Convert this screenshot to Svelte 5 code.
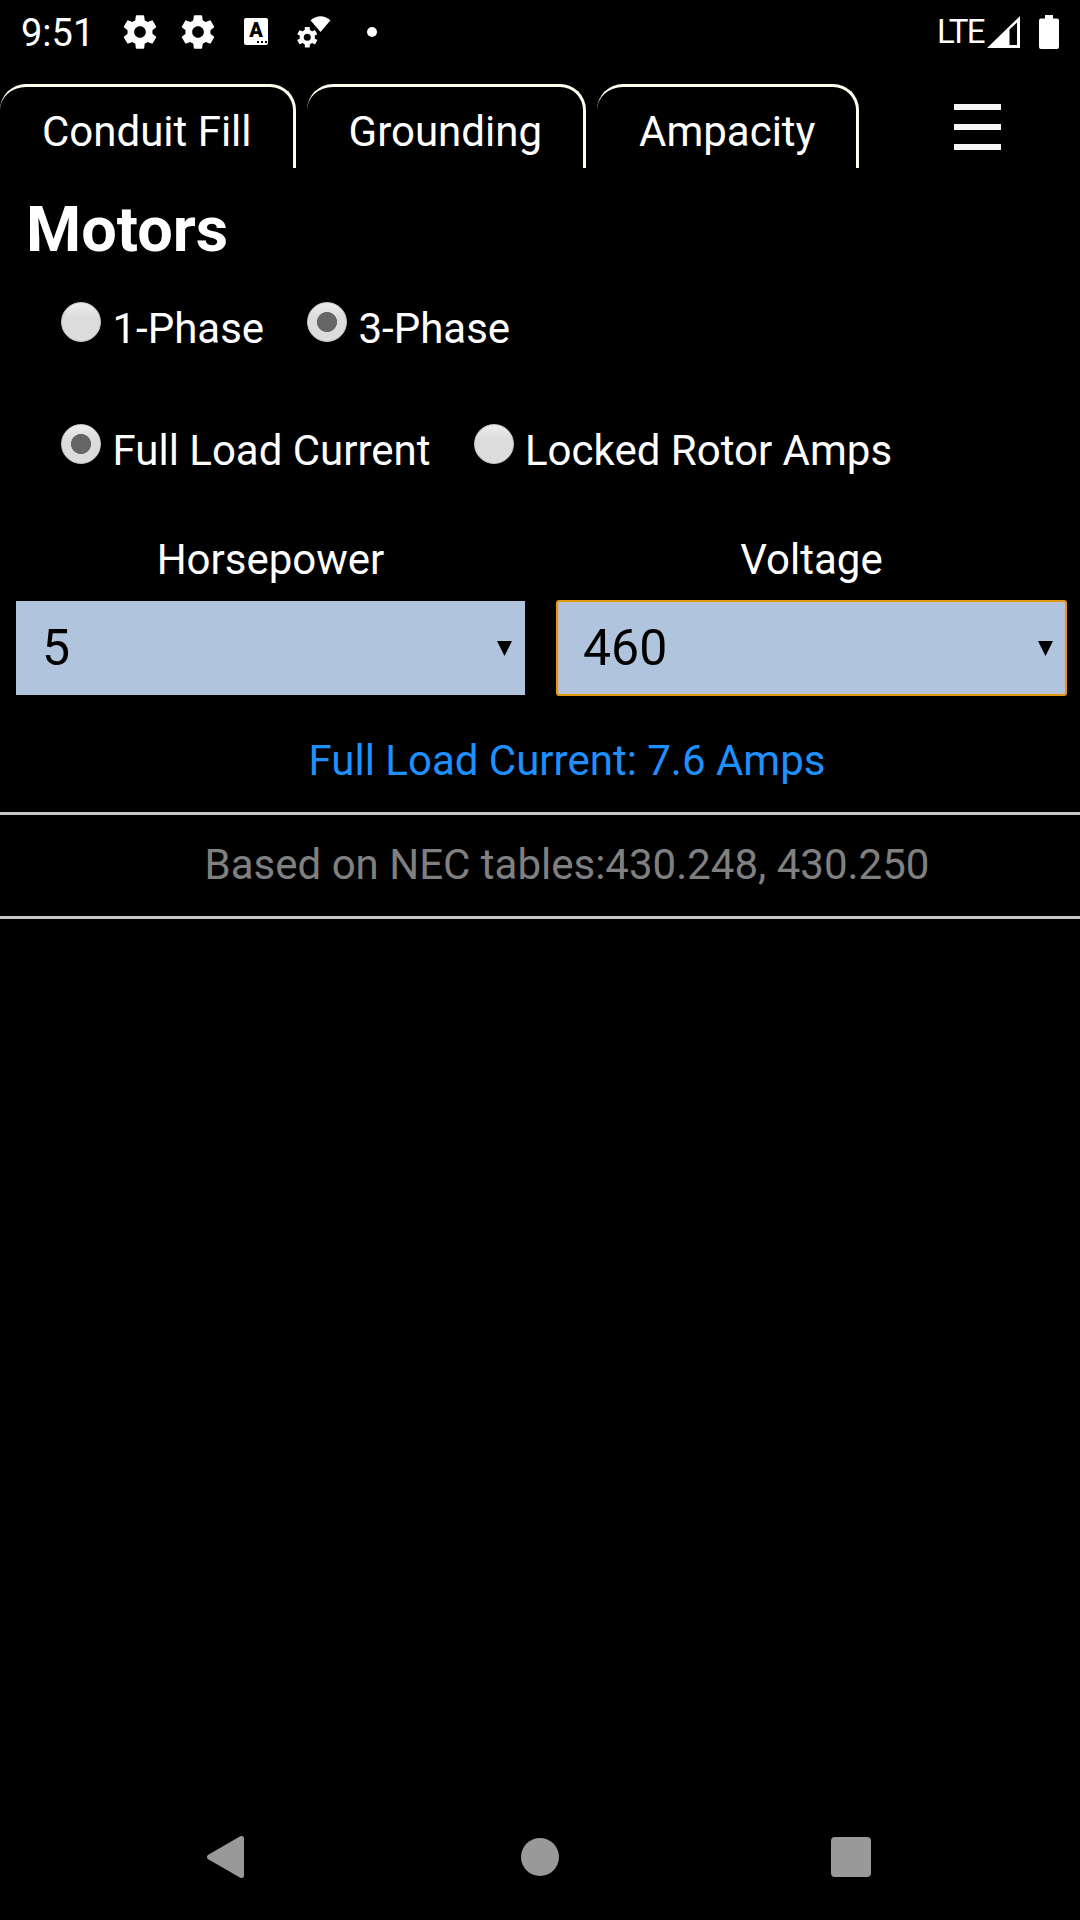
<script>
  const tabs = ['Conduit Fill', 'Grounding', 'Ampacity'];

  const groups = [
    {
      name: 'phase',
      options: [
        { label: '1-Phase', width: 'w-phase' },
        { label: '3-Phase', width: '' }
      ]
    },
    {
      name: 'mode',
      options: [
        { label: 'Full Load Current', width: 'w-flc' },
        { label: 'Locked Rotor Amps', width: '' }
      ]
    }
  ];

  let picked = $state({ phase: '3-Phase', mode: 'Full Load Current' });

  const fields = [
    { label: 'Horsepower', value: '5', focused: false },
    { label: 'Voltage', value: '460', focused: true }
  ];
</script>

{#snippet gear(cls)}
  <svg class={cls} viewBox="0 0 24 24" aria-hidden="true">
    <path fill="#fff" d="M19.43 12.98c.04-.32.07-.64.07-.98s-.03-.66-.07-.98l2.11-1.65c.19-.15.24-.42.12-.64l-2-3.46c-.12-.22-.39-.3-.61-.22l-2.49 1c-.52-.4-1.08-.73-1.69-.98l-.38-2.65C14.46 2.18 14.25 2 14 2h-4c-.25 0-.46.18-.49.42l-.38 2.65c-.61.25-1.17.59-1.69.98l-2.49-1c-.23-.09-.49 0-.61.22l-2 3.46c-.13.22-.07.49.12.64l2.11 1.65c-.04.32-.07.65-.07.98s.03.66.07.98l-2.11 1.65c-.19.15-.24.42-.12.64l2 3.46c.12.22.39.3.61.22l2.49-1c.52.4 1.08.73 1.69.98l.38 2.65c.03.24.24.42.49.42h4c.25 0 .46-.18.49-.42l.38-2.65c.61-.25 1.17-.59 1.69-.98l2.49 1c.23.09.49 0 .61-.22l2-3.46c.12-.22.07-.49-.12-.64l-2.11-1.65zM12 15.5c-1.93 0-3.5-1.57-3.5-3.5s1.57-3.5 3.5-3.5 3.5 1.57 3.5 3.5-1.57 3.5-3.5 3.5z" />
  </svg>
{/snippet}

<div class="screen">
  <header class="status">
    <span class="clock">9:51</span>
    {@render gear('gear')}
    {@render gear('gear second')}
    <span class="app-badge">
      <b>A</b>
      <svg width="10" height="2" viewBox="0 0 10 2"><path d="M0 0h2v2H0zM4 0h2v2H4zM8 0h2v2H8z" fill="#000" /></svg>
    </span>
    <svg class="wifi-gear" width="34" height="32" viewBox="0 0 34 32">
      <path d="M13.5 4.2Q23.5-3.6 33.500 4.200L23.500 16Z" fill="#fff" />
      <g transform="translate(10.300 21.200)">
        <g fill="#fff">
          <circle r="7.600" />
          <rect x="-2.500" y="-10.200" width="5" height="20.400" rx=".6" />
          <rect x="-2.500" y="-10.200" width="5" height="20.400" rx=".6" transform="rotate(60)" />
          <rect x="-2.500" y="-10.200" width="5" height="20.400" rx=".6" transform="rotate(120)" />
        </g>
        <circle r="3.500" fill="#000" />
      </g>
    </svg>
    <span class="more"></span>
    <span class="lte">LTE</span>
    <svg class="signal" width="33" height="32" viewBox="0 0 33 32">
      <path fill="#fff" fill-rule="evenodd" d="M0 32L33 0V32ZM22.500 13.500V29H30V6.500Z" />
    </svg>
    <svg class="battery" width="20" height="34" viewBox="0 0 20 34">
      <path fill="#fff" d="M6 0h8v3.500h4a2 2 0 0 1 2 2V32a2 2 0 0 1-2 2H2a2 2 0 0 1-2-2V5.500a2 2 0 0 1 2-2h4z" />
    </svg>
  </header>

  <nav class="tabs">
    {#each tabs as tab}
      <div class="tab">{tab}</div>
    {/each}
    <div class="menu"><i></i><i></i><i></i></div>
  </nav>

  <main>
    <h1>Motors</h1>

    {#each groups as group}
      <div class="radios">
        {#each group.options as option}
          <label class={option.width}>
            <input type="radio" name={group.name} value={option.label} bind:group={picked[group.name]} />
            <span>{option.label}</span>
          </label>
        {/each}
      </div>
    {/each}

    <div class="fields">
      {#each fields as field}
        <div class="field">
          <div class="caption">{field.label}</div>
          <div class="select" class:focused={field.focused}>
            <span>{field.value}</span>
            <svg width="15" height="15" viewBox="0 0 15 15"><path d="M0 0H15L7.500 15Z" /></svg>
          </div>
        </div>
      {/each}
    </div>

    <div class="row result">Full Load Current: 7.6 Amps</div>
    <div class="row note">Based on NEC tables:430.248, 430.250</div>
  </main>

  <footer class="system-nav">
    <svg width="37" height="42" viewBox="0 0 37 42">
      <path d="M2.500 21L34.500 2.500V39.500Z" fill="#999" stroke="#999" stroke-width="5" stroke-linejoin="round" />
    </svg>
    <span class="home"></span>
    <span class="recents"></span>
  </footer>
</div>

<style>
  :global(body) {
    background: #000;
  }

  .screen {
    width: 1080px;
    height: 1920px;
    overflow: hidden;
    display: flex;
    flex-direction: column;
    background: #000;
    color: #fff;
    font: 42px/50px Roboto, sans-serif;
  }

  .status {
    height: 63px;
    flex: none;
    display: flex;
    align-items: center;
  }

  .clock {
    box-sizing: border-box;
    width: 120px;
    padding: 3px 0 0 21px;
    font-size: 38px;
  }

  .gear {
    width: 40px;
    height: 40px;
    flex: none;
  }

  .gear.second {
    margin-left: 18px;
  }

  .app-badge {
    width: 24px;
    height: 27px;
    margin-left: 26px;
    flex: none;
    display: flex;
    flex-direction: column;
    align-items: center;
    border-radius: 2px;
    background: #fff;
    color: #000;
  }

  .app-badge b {
    font-size: 20px;
    line-height: 24px;
    height: 23px;
    font-weight: 900;
  }

  .app-badge svg {
    flex: none;
    margin-left: 12px;
  }

  .wifi-gear {
    margin-left: 29px;
    flex: none;
  }

  .more {
    width: 10px;
    height: 10px;
    margin-left: 36px;
    border-radius: 50%;
    background: #fff;
  }

  .lte {
    width: 50px;
    margin-left: auto;
    font-size: 33px;
    letter-spacing: -1.600px;
  }

  .signal {
    margin-right: 19px;
    flex: none;
  }

  .battery {
    margin-right: 21px;
    flex: none;
  }

  .tabs {
    height: 105px;
    flex: none;
    display: flex;
    align-items: flex-end;
    gap: 11px;
  }

  .tab {
    box-sizing: border-box;
    height: 84px;
    padding: 20px 41px 0 42px;
    border-top: 3px solid #fffff0;
    border-right: 3px solid #fffff0;
    border-radius: 26px 26px 0 0;
    white-space: nowrap;
  }

  .menu {
    width: 47px;
    height: 46px;
    margin: 0 79px 18px auto;
    display: flex;
    flex-direction: column;
    justify-content: space-between;
  }

  .menu i {
    height: 6px;
    background: #f5f5f5;
  }

  main {
    flex: 1;
    padding-top: 25px;
  }

  h1 {
    height: 109px;
    margin: 0;
    padding-left: 26px;
    font-size: 63px;
    line-height: 74px;
  }

  .radios {
    height: 122px;
    padding-left: 61px;
    display: flex;
    align-items: flex-start;
  }

  label {
    display: flex;
    gap: 11.500px;
  }

  .w-phase {
    width: 246px;
  }

  .w-flc {
    width: 412.500px;
  }

  label span {
    padding-top: 2px;
    white-space: nowrap;
  }

  input {
    appearance: none;
    width: 40px;
    height: 40px;
    margin: 0;
    flex: none;
    border-radius: 50%;
    background: linear-gradient(#ededed, #dcdcdc 38%, #dcdcdc);
    border: 1px solid #c4c4c4;
  }

  input:checked {
    background:
      radial-gradient(circle, #666 0 9.700px, transparent 10.300px),
      linear-gradient(#ededed, #dcdcdc 38%, #dcdcdc);
  }

  .fields {
    display: grid;
    grid-template-columns: 509px 509px;
    gap: 32px;
    padding: 0 14px 0 16px;
    margin-top: -11px;
  }

  .caption {
    height: 66px;
    text-align: center;
  }

  .select {
    height: 94px;
    box-sizing: border-box;
    padding: 0 13px 0 26px;
    display: flex;
    align-items: center;
    justify-content: space-between;
    background: #b0c4de;
    color: #000;
    font-size: 50px;
    line-height: 60px;
  }

  .select.focused {
    border-radius: 2px;
    outline: 2px solid #e09a10;
    outline-offset: -1px;
    box-shadow: inset 0 0 0 2px #c4bcc4;
  }

  .row {
    box-sizing: border-box;
    border-bottom: 3px solid #c8c8c8;
    padding-left: 54px;
    text-align: center;
  }

  .result {
    height: 120px;
    padding-top: 41px;
    color: #1e90ff;
  }

  .note {
    height: 104px;
    padding-top: 25px;
    color: #808080;
  }

  .system-nav {
    height: 126px;
    flex: none;
    padding: 0 209px 0 207px;
    display: flex;
    align-items: center;
    justify-content: space-between;
  }

  .home {
    width: 38px;
    height: 38px;
    margin-left: 5px;
    border-radius: 50%;
    background: #999;
  }

  .recents {
    width: 40px;
    height: 40px;
    border-radius: 4px;
    background: #999;
  }
</style>
